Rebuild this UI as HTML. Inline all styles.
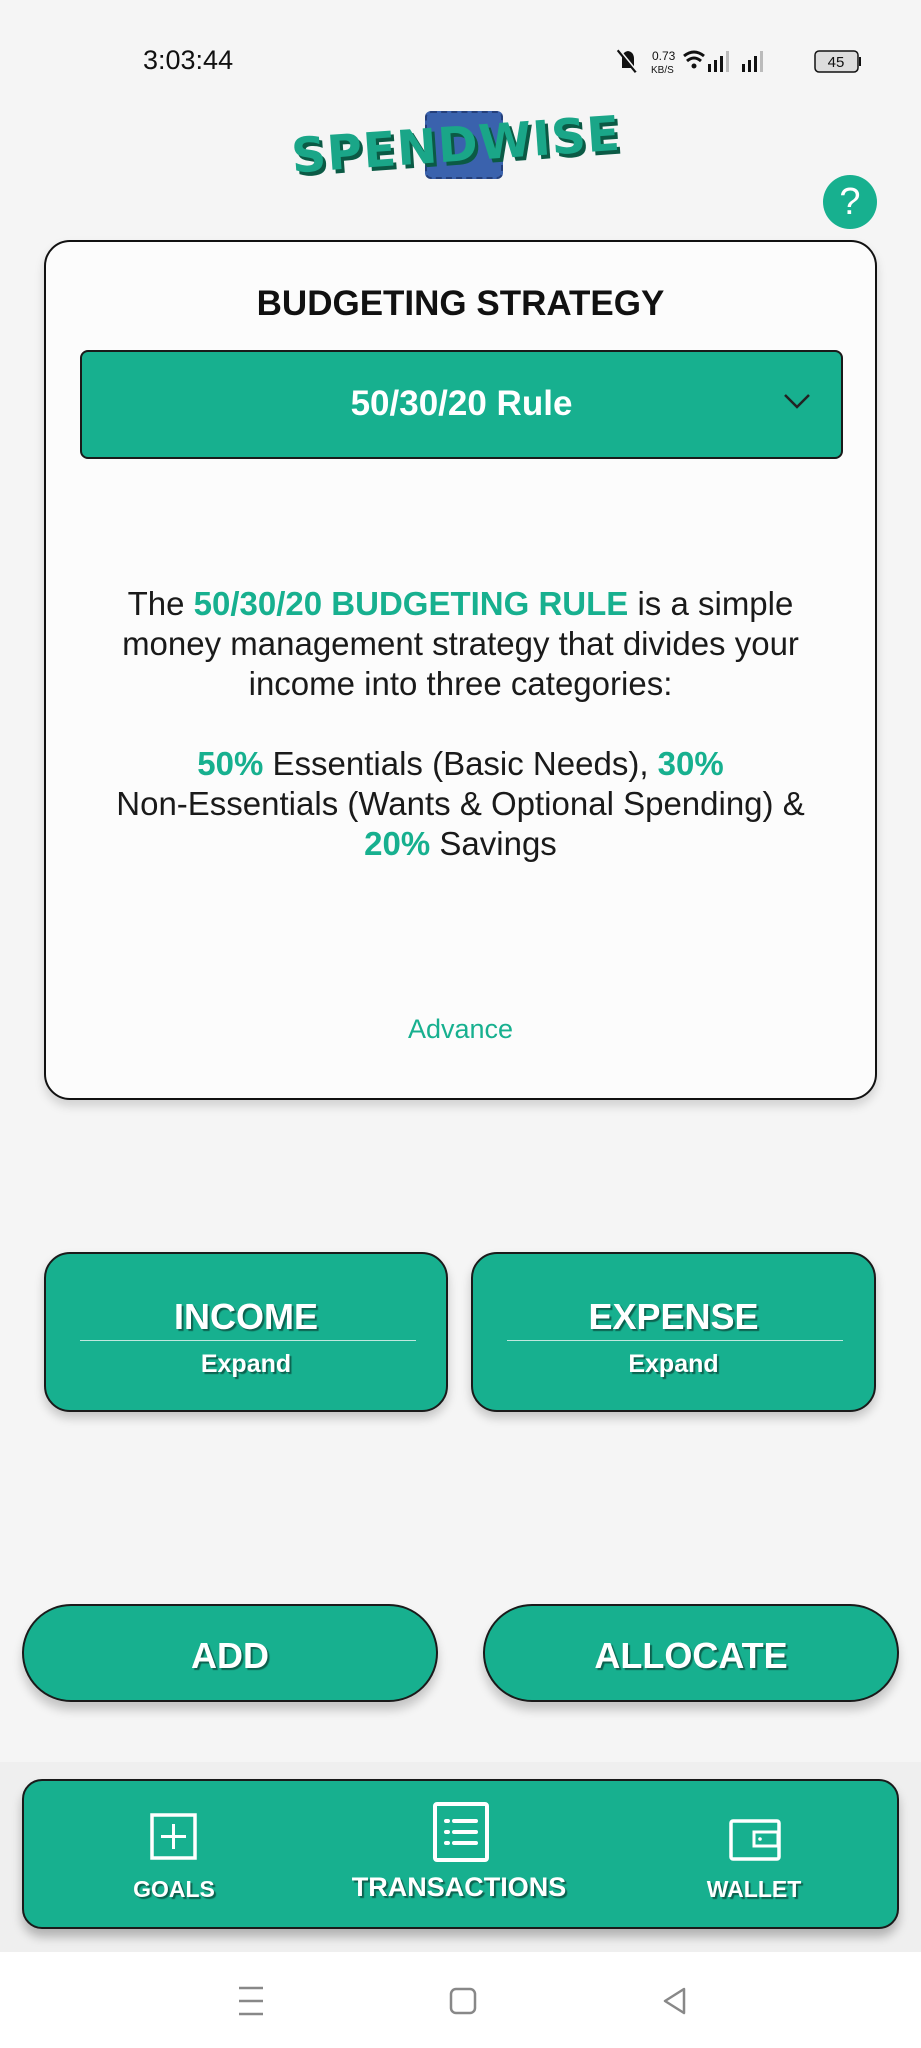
<!DOCTYPE html>
<html><head><meta charset="utf-8"><style>
*{box-sizing:border-box;margin:0;padding:0}
html,body{width:921px;height:2048px;overflow:hidden}
body{background:#f5f5f5;font-family:"Liberation Sans",Arial,sans-serif;position:relative;color:#1a1a1a}
.abs{position:absolute}
.g{color:#17b08f;font-weight:bold}
.green{background:#17b08f;border:2px solid #1a1a1a}
.btxt{color:#fff;font-weight:bold;text-shadow:2px 2px 1px rgba(0,0,0,.45);text-align:center;white-space:nowrap}
.line{white-space:nowrap;text-align:center;width:100%;position:absolute;left:0}
</style></head><body>
<div class="abs" style="left:143px;top:45px;font-size:27px;color:#111">3:03:44</div>
<svg class="abs" style="left:614px;top:46px" width="250" height="32" viewBox="0 0 250 32">
<path d="M8 22 L8 13 Q8 6 14 5 Q20 6 20 13 L20 22 Z" fill="#111"/><line x1="4" y1="4" x2="22" y2="26" stroke="#111" stroke-width="3"/><line x1="5" y1="3" x2="23" y2="25" stroke="#f5f5f5" stroke-width="1.5"/>
<text x="38" y="14" font-size="12" font-family="Liberation Sans" fill="#111">0.73</text><text x="37" y="27" font-size="10" font-family="Liberation Sans" fill="#111">KB/S</text>
<path d="M70 10 Q80 2 90 10" stroke="#111" stroke-width="3" fill="none"/><path d="M73 15 Q80 9 87 15" stroke="#111" stroke-width="3" fill="none"/><circle cx="80" cy="20" r="2.5" fill="#111"/>
<rect x="94" y="18" width="3" height="8" fill="#111"/><rect x="100" y="14" width="3" height="12" fill="#111"/><rect x="106" y="10" width="3" height="16" fill="#111"/><rect x="112" y="5" width="3" height="21" fill="#bbb"/>
<rect x="128" y="18" width="3" height="8" fill="#111"/><rect x="134" y="14" width="3" height="12" fill="#111"/><rect x="140" y="10" width="3" height="16" fill="#111"/><rect x="146" y="5" width="3" height="21" fill="#bbb"/>
<rect x="201" y="5" width="43" height="21" rx="4" fill="#ddd" stroke="#111" stroke-width="1.5"/><rect x="245" y="11" width="2" height="9" fill="#111"/>
<text x="222" y="21" font-size="15" text-anchor="middle" font-family="Liberation Sans" fill="#111">45</text></svg>
<!-- logo -->
<div class="abs" style="left:425px;top:111px;width:78px;height:68px;background:#3a62ad;border-radius:6px;border:2px dashed #243f7a"></div>
<div class="abs" style="left:271px;top:117px;width:370px;text-align:center;font-size:48px;font-weight:900;color:#1aa688;letter-spacing:1px;text-shadow:3px 4px 0 #0b5a45;transform:rotate(-4deg);font-family:'DejaVu Sans',sans-serif">SPENDWISE</div>
<div class="abs" style="left:823px;top:175px;width:54px;height:54px;border-radius:50%;background:#17b08f;color:#fff;font-size:38px;text-align:center;line-height:54px">?</div>
<!-- card -->
<div class="abs" style="left:44px;top:240px;width:833px;height:860px;background:#fcfcfc;border:2px solid #111;border-radius:26px;box-shadow:0 6px 10px rgba(0,0,0,.15)">
 <div class="line" style="top:42px;font-size:35px;font-weight:bold;color:#111">BUDGETING STRATEGY</div>
 <div class="abs green" style="left:34px;top:108px;width:763px;height:109px;border-radius:8px">
  <div class="line" style="top:32px;font-size:35px;font-weight:bold;color:#fff">50/30/20 Rule</div>
  <svg class="abs" style="left:700px;top:40px" width="30" height="20"><path d="M3 3 L15 15 L27 3" stroke="#222" stroke-width="2.5" fill="none"/></svg>
 </div>
 <div class="line" style="top:342px;font-size:33px;line-height:40px">The <span class="g">50/30/20 BUDGETING RULE</span> is a simple<br>money management strategy that divides your<br>income into three categories:<br><br><span class="g">50%</span> Essentials (Basic Needs), <span class="g">30%</span><br>Non-Essentials (Wants &amp; Optional Spending) &amp;<br><span class="g">20%</span> Savings</div>
 <div class="line" style="top:772px;font-size:27px;color:#17b08f">Advance</div>
</div>
<!-- income/expense -->
<div class="abs green" style="left:44px;top:1252px;width:404px;height:160px;border-radius:26px;box-shadow:0 6px 10px rgba(0,0,0,.2)">
 <div class="line btxt" style="top:42px;font-size:36px">INCOME</div>
 <div class="abs" style="left:34px;top:86px;width:336px;height:1px;background:#bfe8df"></div>
 <div class="line btxt" style="top:96px;font-size:25px">Expand</div>
</div>
<div class="abs green" style="left:471px;top:1252px;width:405px;height:160px;border-radius:26px;box-shadow:0 6px 10px rgba(0,0,0,.2)">
 <div class="line btxt" style="top:42px;font-size:36px">EXPENSE</div>
 <div class="abs" style="left:34px;top:86px;width:336px;height:1px;background:#bfe8df"></div>
 <div class="line btxt" style="top:96px;font-size:25px">Expand</div>
</div>
<!-- add/allocate -->
<div class="abs green" style="left:22px;top:1604px;width:416px;height:98px;border-radius:49px;box-shadow:0 8px 10px rgba(0,0,0,.2)">
 <div class="line btxt" style="top:29px;font-size:36px">ADD</div></div>
<div class="abs green" style="left:483px;top:1604px;width:416px;height:98px;border-radius:49px;box-shadow:0 8px 10px rgba(0,0,0,.2)">
 <div class="line btxt" style="top:29px;font-size:36px">ALLOCATE</div></div>
<!-- nav -->
<div class="abs" style="left:0;top:1762px;width:921px;height:190px;background:#efefef"></div>
<div class="abs green" style="left:22px;top:1779px;width:877px;height:150px;border-radius:20px;box-shadow:0 8px 10px rgba(0,0,0,.25)">
 <svg class="abs" style="left:125px;top:31px" width="50" height="50"><rect x="3" y="3" width="43" height="43" fill="none" stroke="#fff" stroke-width="3.5"/><path d="M24.5 12 V37 M12 24.5 H37" stroke="#fff" stroke-width="3"/></svg>
 <div class="abs btxt" style="left:80px;top:95px;width:140px;font-size:23px">GOALS</div>
 <svg class="abs" style="left:408px;top:20px" width="58" height="62"><rect x="3" y="3" width="52" height="56" rx="2" fill="none" stroke="#fff" stroke-width="4"/><path d="M14 20h2M14 31h2M14 42h2M22 20h22M22 31h22M22 42h22" stroke="#fff" stroke-width="4" stroke-linecap="round"/></svg>
 <div class="abs btxt" style="left:310px;top:91px;width:250px;font-size:27px">TRANSACTIONS</div>
 <svg class="abs" style="left:704px;top:37px" width="54" height="44"><rect x="3" y="3" width="48" height="38" rx="2" fill="none" stroke="#fff" stroke-width="3.5"/><rect x="26" y="14" width="24" height="14" fill="none" stroke="#fff" stroke-width="3"/><circle cx="32" cy="21" r="1.8" fill="#fff"/></svg>
 <div class="abs btxt" style="left:660px;top:95px;width:140px;font-size:23px">WALLET</div>
</div>
<!-- system bar -->
<div class="abs" style="left:0;top:1952px;width:921px;height:96px;background:#fff"></div>
<svg class="abs" style="left:236px;top:1985px" width="30" height="32"><path d="M3 3h24M3 16h24M3 29h24" stroke="#888" stroke-width="2.5"/></svg>
<svg class="abs" style="left:449px;top:1987px" width="28" height="28"><rect x="2" y="2" width="24" height="24" rx="5" fill="none" stroke="#888" stroke-width="2.5"/></svg>
<svg class="abs" style="left:660px;top:1986px" width="28" height="30"><path d="M24 3 L5 15 L24 27 Z" fill="none" stroke="#888" stroke-width="2.5" stroke-linejoin="round"/></svg>
</body></html>
